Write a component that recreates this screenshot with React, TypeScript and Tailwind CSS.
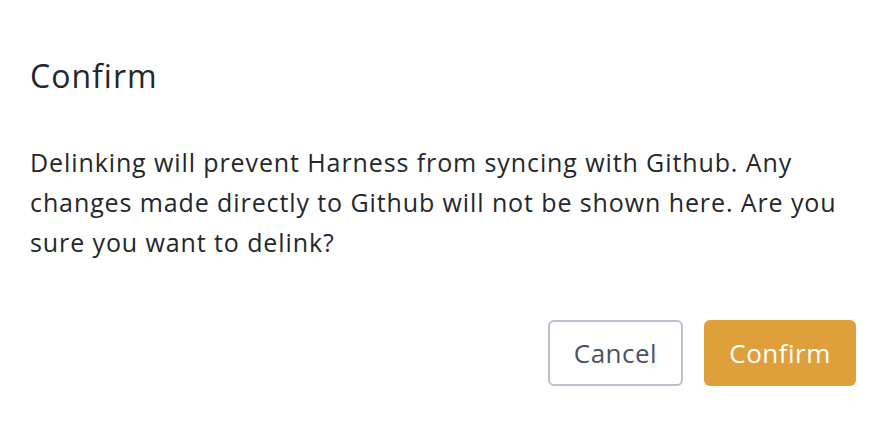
export default function App() {
  return (
    <div
      className="w-[874px] h-[422px] bg-white text-[#24272b]"
      style={{ fontFamily: '"Open Sans", "Noto Sans", sans-serif' }}
    >
      <div className="px-[30px] pt-[56px]">
        <h2 className="text-[32px] leading-[40px] font-medium tracking-[1px]">Confirm</h2>
        <p className="mt-[46px] w-[820px] text-[25px] leading-[40px] tracking-[0.9px]">
          Delinking will prevent Harness from syncing with Github. Any changes made directly to Github will not be shown here. Are you sure you want to delink?
        </p>
      </div>
      <div className="flex justify-end gap-[21px] pr-[18px] mt-[58px]">
        <button className="h-[66px] w-[135px] rounded-[6px] border-2 border-[#bcc0cb] bg-white text-[26px] tracking-[0.5px] text-[#4a5363]">
          Cancel
        </button>
        <button className="h-[66px] w-[152px] rounded-[6px] bg-[#dfa03c] text-[26px] tracking-[0.5px] text-white">
          Confirm
        </button>
      </div>
    </div>
  )
}
